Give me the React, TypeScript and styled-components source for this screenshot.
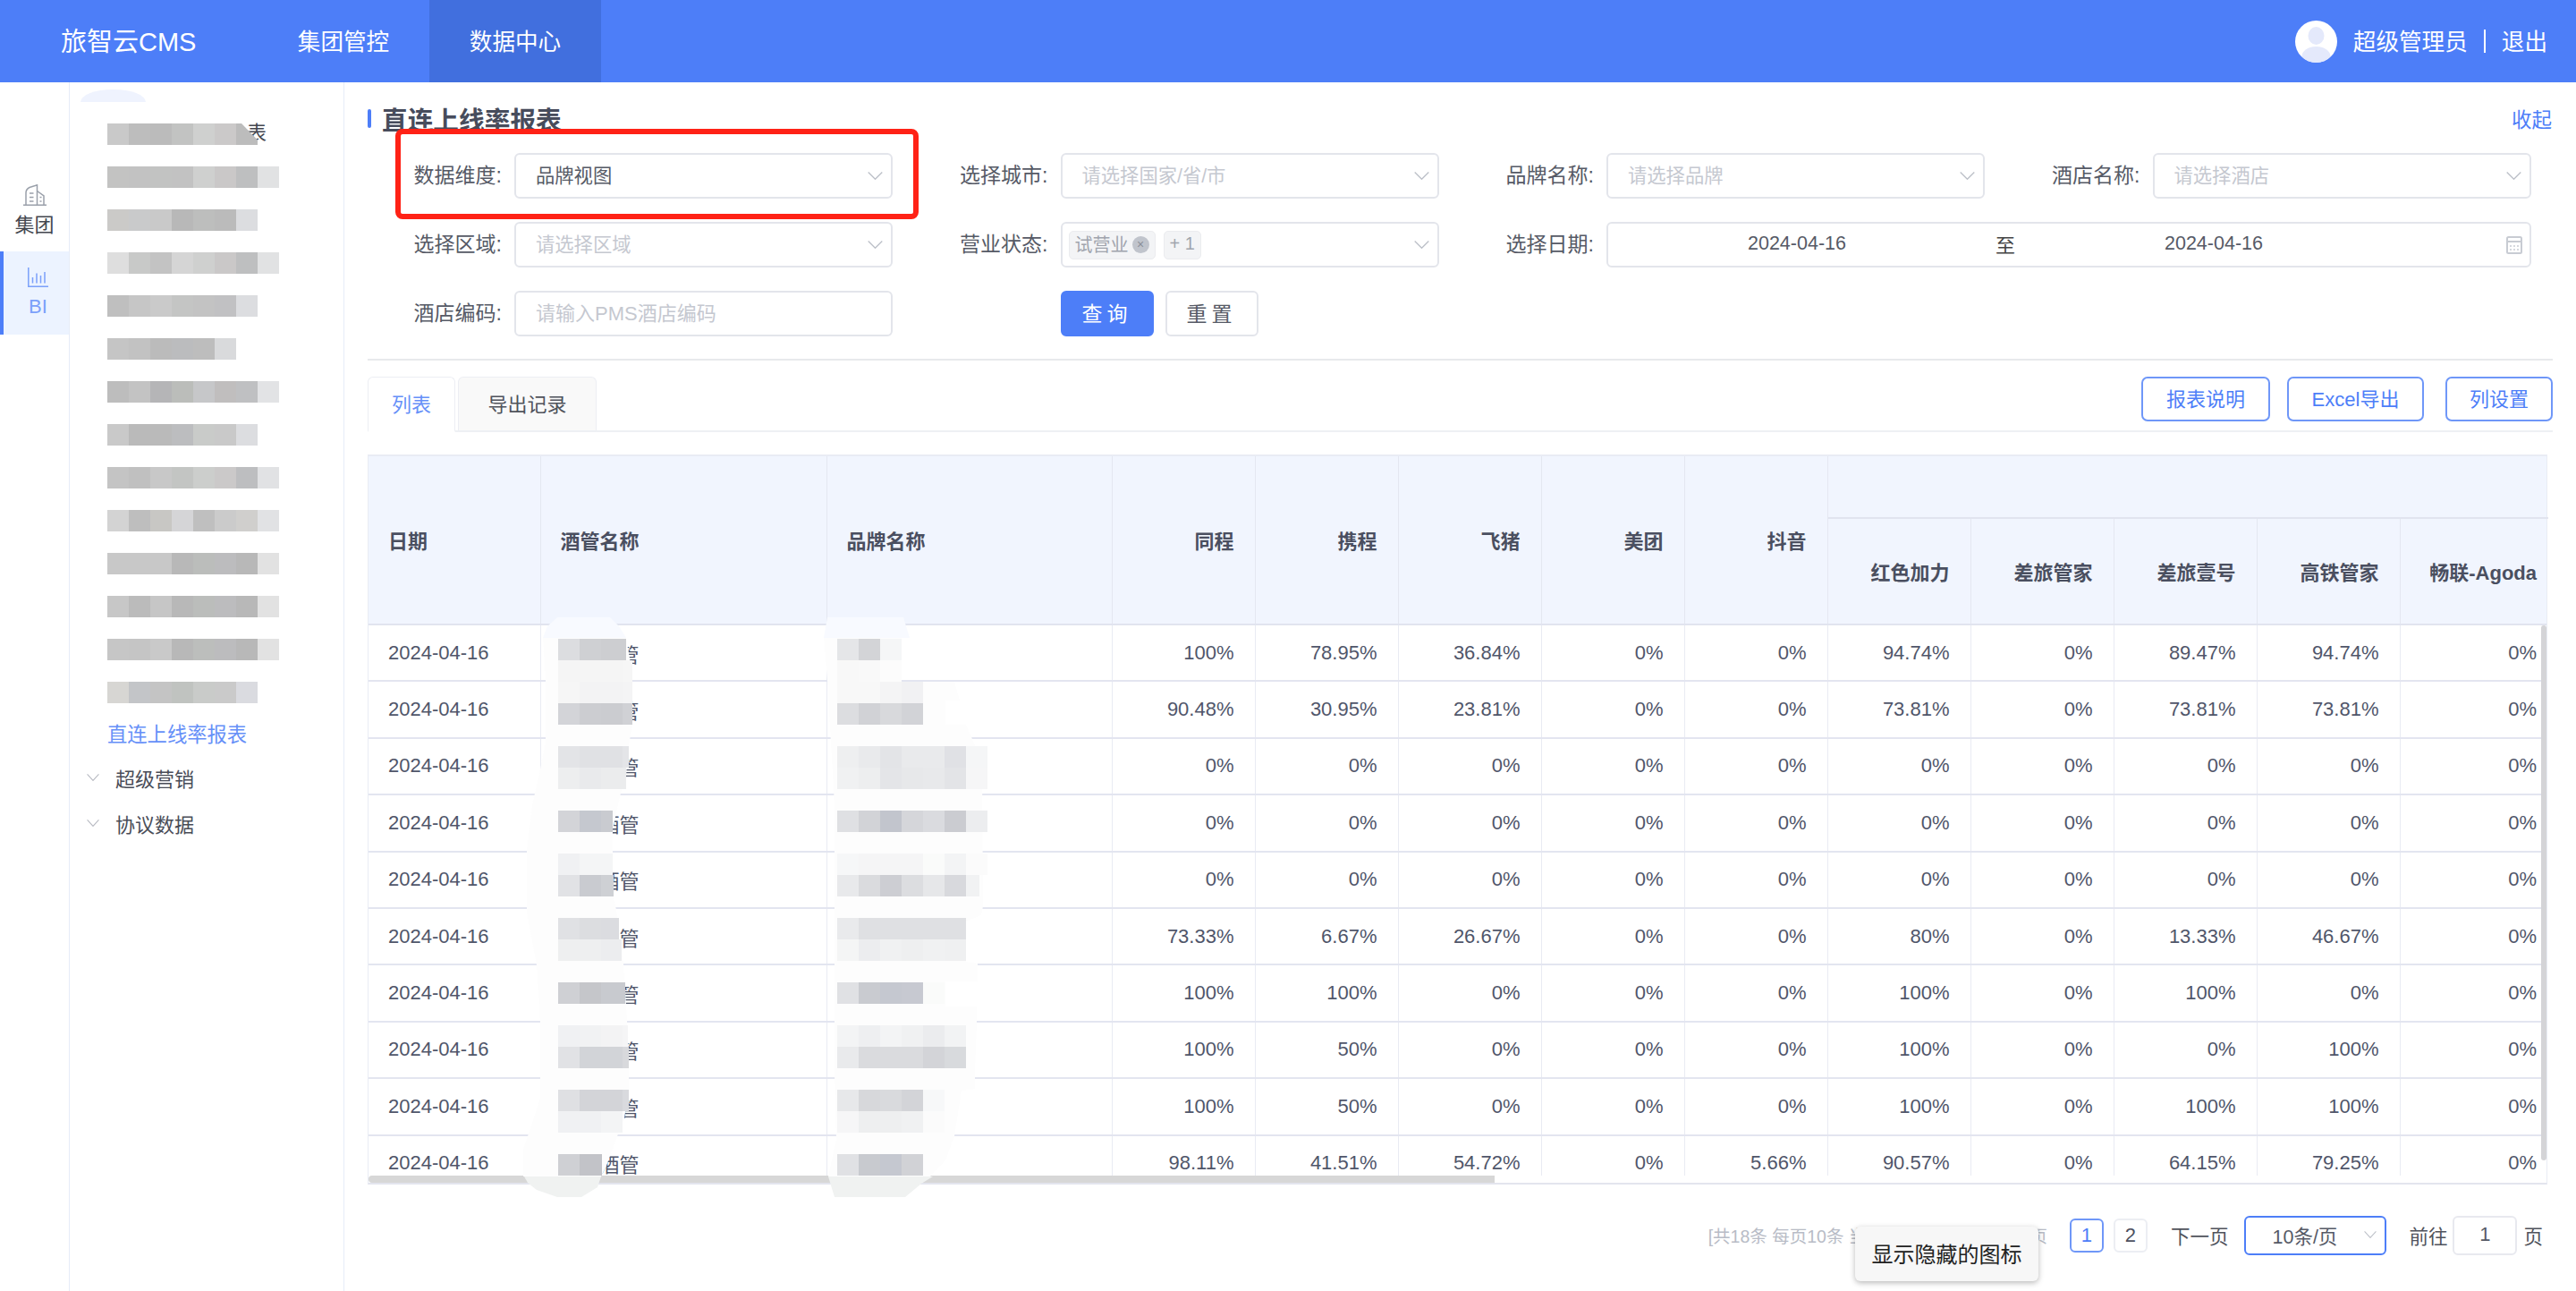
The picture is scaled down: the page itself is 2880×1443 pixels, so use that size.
import React from "react";
import styled, { createGlobalStyle } from "styled-components";

const BLUE = "#4d7ef8";
const FONT = `"Liberation Sans", "Noto Sans CJK SC", sans-serif`;

const Global = createGlobalStyle`
  html, body { margin: 0; padding: 0; background: #fff; }
  body { font-family: ${FONT}; font-size: 22px; color: #50566a; overflow: hidden; }
  * { box-sizing: border-box; }
`;

const Page = styled.div`
  position: relative;
  width: 2880px;
  height: 1443px;
  display: flex;
  flex-direction: column;
  overflow: hidden;
`;

/* ---------- top bar ---------- */
const TopBar = styled.header`
  height: 92px;
  flex: none;
  display: flex;
  align-items: stretch;
  background: ${BLUE};
  color: #fff;
`;
const Logo = styled.div`
  width: 288px;
  padding-left: 68px;
  display: flex;
  align-items: center;
  font-size: 29px;
  padding-bottom: 5px;
`;
const NavItem = styled.div<{ $active?: boolean }>`
  width: 192px;
  display: flex;
  align-items: center;
  justify-content: center;
  font-size: 25.6px;
  padding-bottom: 3px;
  background: ${(p) => (p.$active ? "#416fde" : "transparent")};
`;
const UserArea = styled.div`
  margin-left: auto;
  padding-right: 32px;
  display: flex;
  align-items: center;
  font-size: 25.6px;
`;
const UserName = styled.span`
  margin-left: 18px;
  padding-bottom: 3px;
`;
const UserLogout = styled.span`
  padding-bottom: 3px;
`;
const UserSep = styled.span`
  width: 2px;
  height: 26px;
  margin: 0 18px;
  background: #fff;
`;

/* ---------- body ---------- */
const Body = styled.div`
  flex: 1;
  display: flex;
  min-height: 0;
`;
const Rail = styled.nav`
  width: 78px;
  flex: none;
  padding-top: 96px;
  border-right: 1px solid #e6ecf8;
`;
const RailItem = styled.div<{ $active?: boolean }>`
  height: 93px;
  padding-top: 18px;
  display: flex;
  flex-direction: column;
  align-items: center;
  gap: 10px;
  line-height: 24px;
  font-size: 22px;
  color: ${(p) => (p.$active ? "#7ba0fa" : "#44474f")};
  background: ${(p) => (p.$active ? "#ecf3ff" : "transparent")};
  border-left: 4px solid ${(p) => (p.$active ? BLUE : "transparent")};
  padding-right: ${(p) => (p.$active ? "0" : "4px")};
  padding-left: ${(p) => (p.$active ? "4px" : "0")};
`;

const Menu = styled.aside`
  position: relative;
  width: 307px;
  flex: none;
  padding-top: 32px;
  border-right: 1px solid #e6ecf8;
`;
const MenuArc = styled.span`
  position: absolute;
  left: 12px;
  top: 8px;
  width: 73px;
  height: 14px;
  background: #eff3fe;
  border-radius: 50% 50% 0 0 / 100% 100% 0 0;
`;
const MenuRow = styled.div`
  height: 48px;
  padding: 14px 0 0 42px;
  display: flex;
  align-items: flex-start;
`;
const MosaicCell = styled.span<{ $c: string; $cut?: boolean }>`
  position: relative;
  z-index: 1;
  width: 24px;
  height: 24px;
  background: ${(p) => p.$c};
  ${(p) => (p.$cut ? "clip-path: polygon(0 0, 25% 0, 100% 77%, 100% 100%, 0 100%);" : "")}
`;
const MenuTail = styled.span`
  margin: -1px 0 0 -12px;
  line-height: 24px;
  color: #44474f;
`;
const MenuLink = styled.div`
  height: 48px;
  padding: 0 0 3px 42px;
  display: flex;
  align-items: center;
  color: #6690f8;
  font-size: 22.3px;
`;
const MenuGroup = styled.div`
  height: 51px;
  padding: 0 0 2px 19px;
  display: flex;
  align-items: center;
  gap: 18px;
  color: #4a4d58;
  &:first-of-type {
    margin-top: 3px;
  }
`;

const Main = styled.main`
  flex: 1;
  min-width: 0;
  padding: 20px 26px 0;
`;
const TitleRow = styled.div`
  height: 40px;
  display: flex;
  align-items: center;
`;
const TitleMark = styled.span`
  width: 4px;
  height: 21px;
  margin-right: 12px;
  border-radius: 2px;
  background: ${BLUE};
`;
const Title = styled.h1`
  margin: 0;
  font-size: 28.7px;
  font-weight: 700;
  color: #474c5c;
`;
const Collapse = styled.span`
  margin-left: auto;
  padding-right: 1px;
  color: ${BLUE};
  font-size: 22.5px;
`;

/* ---------- filter form ---------- */
const FilterGrid = styled.div`
  margin-top: 19px;
  display: grid;
  grid-template-columns: repeat(4, 587px);
  grid-auto-rows: 51px;
  column-gap: 23.5px;
  row-gap: 26px;
`;
const Field = styled.div<{ $span?: number }>`
  display: flex;
  align-items: center;
  ${(p) => (p.$span ? `grid-column: span ${p.$span};` : "")}
`;
const FieldLabel = styled.label`
  width: 164px;
  flex: none;
  padding: 0 14px 5px 0;
  text-align: right;
  font-size: 23px;
  color: #565a66;
`;
const Control = styled.div<{ $focus?: boolean }>`
  flex: 1;
  height: 100%;
  min-width: 0;
  display: flex;
  align-items: center;
  border: 2px solid ${(p) => (p.$focus ? BLUE : "#e3e5eb")};
  border-radius: 6px;
  background: #fff;
`;
const ControlText = styled.span<{ $muted?: boolean; $code?: boolean }>`
  padding: 0 0 5px 22px;
  font-size: ${(p) => (p.$code ? "22px" : "21.3px")};
  color: ${(p) => (p.$muted ? "#c5c8d0" : "#565a66")};
`;
const CaretSlot = styled.span`
  margin-left: auto;
  padding-right: 9px;
  display: flex;
`;
const Tag = styled.span`
  height: 32px;
  padding: 0 6px 2px;
  display: inline-flex;
  align-items: center;
  gap: 4px;
  border: 1px solid #ebecef;
  border-radius: 5px;
  background: #f3f4f6;
  color: #a0a4ad;
  font-size: 20px;
`;
const TagClose = styled.span`
  width: 19px;
  height: 19px;
  margin-top: 2px;
  border-radius: 50%;
  background: #c0c4cc;
  color: #8b8f99;
  font-size: 14px;
  line-height: 19px;
  text-align: center;
`;
const TagList = styled.div`
  padding-left: 7px;
  display: flex;
  gap: 9px;
`;
const DateValue = styled.span`
  width: 422px;
  padding-bottom: 2px;
  text-align: center;
  color: #565a66;
  font-size: 21.5px;
`;
const DateSep = styled.span`
  width: 44px;
  padding-bottom: 3px;
  text-align: center;
  color: #444;
`;
const CalSlot = styled.span`
  margin-left: auto;
  padding-right: 8px;
  display: flex;
`;
const ButtonRow = styled.div`
  display: flex;
  gap: 13px;
`;
const SearchButton = styled.button<{ $primary?: boolean }>`
  width: 104px;
  height: 51px;
  padding: 0 0 3px;
  font: inherit;
  font-size: 23px;
  letter-spacing: 5px;
  border: 2px solid ${(p) => (p.$primary ? BLUE : "#e3e5eb")};
  border-radius: 6px;
  background: ${(p) => (p.$primary ? BLUE : "#fff")};
  color: ${(p) => (p.$primary ? "#fff" : "#565a66")};
`;
const Divider = styled.div`
  height: 2px;
  margin-top: 25px;
  background: #e8e9ec;
`;

/* ---------- tabs ---------- */
const TabBar = styled.div`
  margin-top: 18px;
  height: 62px;
  display: flex;
  align-items: flex-start;
  border-bottom: 2px solid #eef0f4;
`;
const Tab = styled.div<{ $active?: boolean; $w: number }>`
  width: ${(p) => p.$w}px;
  height: ${(p) => (p.$active ? "62px" : "60px")};
  margin-right: 3px;
  padding-bottom: 3px;
  display: flex;
  align-items: center;
  justify-content: center;
  border: 1px solid #eceef3;
  border-bottom: ${(p) => (p.$active ? "2px solid #fff" : "none")};
  border-radius: 6px 6px 0 0;
  background: ${(p) => (p.$active ? "#fff" : "#f9f9f9")};
  color: ${(p) => (p.$active ? "#6690f8" : "#50535c")};
`;
const TabActions = styled.div`
  margin-left: auto;
  display: flex;
`;
const OutlineButton = styled.button<{ $w: number; $gap?: number }>`
  width: ${(p) => p.$w}px;
  height: 50px;
  margin-left: ${(p) => p.$gap ?? 0}px;
  padding: 0 0 5px;
  font: inherit;
  color: ${BLUE};
  background: #fff;
  border: 2px solid #6f97f8;
  border-radius: 7px;
`;

/* ---------- table ---------- */
const COLS = "192.5px 320px 319.5px repeat(9, 160px) 165px";
const TableFrame = styled.div`
  position: relative;
  margin-top: 25px;
  width: 2437px;
  height: 816px;
  display: flex;
  flex-direction: column;
  border-top: 2px solid #e9ecf4;
  border-bottom: 2px solid #e3e5ee;
  border-left: 1px solid #e9ecf4;
  border-right: 1px solid #e9ecf4;
`;
const HeadGrid = styled.div`
  flex: none;
  display: grid;
  grid-template-columns: ${COLS};
  grid-template-rows: 70px 117px;
  border-bottom: 2px solid #e1e4ef;
  background: #f1f5fe;
`;
const HeadCell = styled.div<{ $col: string; $row: string; $right?: boolean; $last?: boolean; $line?: boolean }>`
  grid-column: ${(p) => p.$col};
  grid-row: ${(p) => p.$row};
  display: flex;
  align-items: center;
  justify-content: ${(p) => (p.$right ? "flex-end" : "flex-start")};
  padding: ${(p) => (p.$last ? "0 13px 1px 0" : p.$right ? "0 23.5px 1px 0" : "0 0 1px 22px")};
  font-weight: 700;
  color: #4a4f60;
  white-space: nowrap;
  border-right: ${(p) => (p.$last ? "none" : "1px solid #e4e7f1")};
  border-bottom: ${(p) => (p.$line ? "2px solid #e1e4ef" : "none")};
`;
const BodyView = styled.div`
  flex: 1;
  min-height: 0;
  overflow: hidden;
`;
const BodyRow = styled.div`
  height: 63.4px;
  display: grid;
  grid-template-columns: ${COLS};
  border-bottom: 2px solid #e3e5f0;
`;
const BodyCell = styled.div<{ $right?: boolean; $last?: boolean }>`
  display: flex;
  align-items: center;
  justify-content: ${(p) => (p.$right ? "flex-end" : "flex-start")};
  padding: ${(p) => (p.$last ? "0 13px 0 0" : p.$right ? "0 23.5px 0 0" : "0 0 0 22px")};
  color: #50566a;
  white-space: nowrap;
  border-right: ${(p) => (p.$last ? "none" : "1px solid #e9ebf3")};
`;
const HTrack = styled.div`
  flex: none;
  height: 8px;
  background: #fff;
`;
const HThumb = styled.div`
  width: 1259px;
  height: 8px;
  background: #d7d7d7;
  border-radius: 4px 0 0 4px;
`;
const VThumb = styled.div`
  position: absolute;
  right: 0;
  top: 189px;
  width: 6px;
  height: 598px;
  background: #d4d4d7;
  border-radius: 3px;
`;

/* ---------- pager ---------- */
const Pager = styled.div`
  margin-top: 35px;
  height: 44px;
  padding-right: 11px;
  display: flex;
  align-items: center;
  justify-content: flex-end;
`;
const PagerSummary = styled.span`
  margin-right: 25px;
  padding-bottom: 2px;
  font-size: 19.5px;
  color: #b8bcc6;
`;
const PageNum = styled.span<{ $active?: boolean; $gap: number }>`
  width: 38px;
  height: 38px;
  margin-right: ${(p) => p.$gap}px;
  display: flex;
  align-items: center;
  justify-content: center;
  border: 2px solid ${(p) => (p.$active ? "#6f97f8" : "#eceef3")};
  border-radius: 6px;
  color: ${(p) => (p.$active ? BLUE : "#4d5160")};
`;
const PagerText = styled.span<{ $ml?: number; $mr?: number }>`
  margin-left: ${(p) => p.$ml ?? 0}px;
  margin-right: ${(p) => p.$mr ?? 0}px;
  padding-bottom: 2px;
  font-size: 21.5px;
  color: #50535c;
`;
const PageSize = styled.div`
  width: 159px;
  height: 44px;
  padding: 0 0 2px 29px;
  display: flex;
  align-items: center;
  border: 2px solid ${BLUE};
  border-radius: 6px;
  font-size: 21.5px;
  color: #565a66;
`;
const PageJump = styled.div`
  width: 72px;
  height: 44px;
  padding-bottom: 2px;
  display: flex;
  align-items: center;
  justify-content: center;
  border: 2px solid #e8e9ef;
  border-radius: 6px;
  color: #565a66;
`;

/* ---------- things lying over the page ---------- */
const RedBox = styled.div`
  position: absolute;
  left: 442px;
  top: 144px;
  width: 585px;
  height: 101px;
  border: 6px solid #ff2216;
  border-radius: 8px;
`;
const Tooltip = styled.div`
  position: absolute;
  left: 2074px;
  top: 1371px;
  width: 205px;
  height: 61px;
  padding-bottom: 3px;
  display: flex;
  align-items: center;
  justify-content: center;
  background: #f7f7f7;
  border-radius: 6px;
  box-shadow: 0 2px 6px rgba(0, 0, 0, 0.28);
  color: #222;
  font-size: 24px;
`;
const SmearLayer = styled.svg`
  position: absolute;
  left: 0;
  top: 0;
  pointer-events: none;
`;

/* ---------- drawn icons ---------- */
const Caret = ({ w = 17, h = 9, c = "#bcc0c8" }: { w?: number; h?: number; c?: string }) => (
  <svg width={w} height={h} viewBox="0 0 17 9" fill="none" preserveAspectRatio="none">
    <path d="M0.7 0.5 L8.5 8.3 L16.3 0.5" stroke={c} strokeWidth="1.3" />
  </svg>
);
const BuildingIcon = () => (
  <svg width="26" height="24" viewBox="0 0 26 24" fill="none" stroke="#9aa0aa" strokeWidth="1.5">
    <path d="M0 23.2 H26" />
    <path d="M3 23 V9.5 Q3 5.5 7 3.5 L15.5 0.8 V23" />
    <path d="M15.5 7.5 L23 13 V23" />
    <path d="M7 10 h4.5 M7 14.5 h4.5 M7 19 h4.5 M18.5 14.5 h2 M18.5 19 h2" />
  </svg>
);
const ChartIcon = () => (
  <svg width="23" height="22" viewBox="0 0 23 22" fill="none" stroke="#7ba0fa" strokeWidth="1.5">
    <path d="M0.8 0 V21.2 H23" />
    <path d="M5.5 11 V17.5 M10 6.5 V17.5 M14.5 9 V17.5 M19 5 V17.5" />
  </svg>
);
const CalendarIcon = () => (
  <svg width="18" height="20" viewBox="0 0 18 20" fill="none">
    <rect x="1" y="1" width="16" height="18" rx="1.5" stroke="#c8ccd3" strokeWidth="2" />
    <path d="M1 6 H17" stroke="#c8ccd3" strokeWidth="2" />
    <path d="M4 11 h2 M8 11 h2 M12 11 h2 M4 15 h2 M8 15 h2 M12 15 h2" stroke="#c8ccd3" strokeWidth="1.5" />
  </svg>
);
const Avatar = () => (
  <svg width="47" height="47" viewBox="0 0 47 47">
    <defs>
      <clipPath id="avatar-disc">
        <circle cx="23.5" cy="23.5" r="23.5" />
      </clipPath>
    </defs>
    <circle cx="23.5" cy="23.5" r="23.5" fill="#fff" />
    <g clipPath="url(#avatar-disc)" fill="#e4e9fb">
      <ellipse cx="23.5" cy="17" rx="9" ry="10" />
      <ellipse cx="23.5" cy="40" rx="16" ry="11" />
    </g>
  </svg>
);

/* ---------- data ---------- */
const menuMosaic: string[][] = [
  ["#c9c9c9", "#bdbdbd", "#bbbbbb", "#c2c3c2", "#cfd0cf", "#cbc9c9", "#bcbcbc"],
  ["#c3c3c2", "#c2c2c2", "#c2c3c2", "#c2c2c2", "#cfd0cf", "#cac8c8", "#bebfc0", "#e1e2e3"],
  ["#cbcac8", "#c9cacb", "#c9c9c9", "#b8b8b8", "#bdbebd", "#bbbbbb", "#dcdde0"],
  ["#dedede", "#c8c9c8", "#c3c3c3", "#d5d5d5", "#cfd0cf", "#cac8c8", "#bebfc0", "#e1e2e3"],
  ["#bfbfbf", "#c6c6c6", "#cacaca", "#c4c5c4", "#c3c3c3", "#c1c1c3", "#dcdde0"],
  ["#c5c5c5", "#c2c2c2", "#bbbbbb", "#bbbcbe", "#bdbdbd", "#d9dadc"],
  ["#bdbdbd", "#c3c3c3", "#b5b5b7", "#bbbdba", "#c6c7c9", "#c0bebe", "#bfc0c2", "#e2e3e5"],
  ["#c9c9c9", "#bababa", "#bababa", "#bcbdbf", "#c9cbc9", "#c9c9c9", "#dcdde0"],
  ["#c4c4c4", "#c0c0c0", "#c8c8c8", "#c3c5c3", "#cccecc", "#cbc9c9", "#bdbec0", "#e1e2e4"],
  ["#d3d3d3", "#bebebe", "#c8c7c4", "#d5d5d7", "#bfbfbf", "#cbcbcb", "#d0cfcd", "#e1e2e4"],
  ["#c8c8c8", "#c8c8c8", "#c8c8c8", "#b8b8b8", "#bbbdbb", "#bcbcbe", "#b8b8b8", "#e2e2e2"],
  ["#c7c7c7", "#bbbbbb", "#c6c6c6", "#b8b8b8", "#bbbdbb", "#bcbcbe", "#b8b8b8", "#e2e2e2"],
  ["#c6c6c6", "#c5c5c5", "#c9c9c9", "#b8b8b8", "#bcbebc", "#bcbcbe", "#b8b8b8", "#e2e2e2"],
  ["#d7d6d3", "#c3c5c8", "#c4c4c4", "#c0c3c0", "#c9cbc9", "#cacaca", "#dadbe0"],
];

const rows: string[][] = [
  ["100%", "78.95%", "36.84%", "0%", "0%", "94.74%", "0%", "89.47%", "94.74%", "0%"],
  ["90.48%", "30.95%", "23.81%", "0%", "0%", "73.81%", "0%", "73.81%", "73.81%", "0%"],
  ["0%", "0%", "0%", "0%", "0%", "0%", "0%", "0%", "0%", "0%"],
  ["0%", "0%", "0%", "0%", "0%", "0%", "0%", "0%", "0%", "0%"],
  ["0%", "0%", "0%", "0%", "0%", "0%", "0%", "0%", "0%", "0%"],
  ["73.33%", "6.67%", "26.67%", "0%", "0%", "80%", "0%", "13.33%", "46.67%", "0%"],
  ["100%", "100%", "0%", "0%", "0%", "100%", "0%", "100%", "0%", "0%"],
  ["100%", "50%", "0%", "0%", "0%", "100%", "0%", "0%", "100%", "0%"],
  ["100%", "50%", "0%", "0%", "0%", "100%", "0%", "100%", "100%", "0%"],
  ["98.11%", "41.51%", "54.72%", "0%", "5.66%", "90.57%", "0%", "64.15%", "79.25%", "0%"],
];

const topHeads = ["同程", "携程", "飞猪", "美团", "抖音"];
const subHeads = ["红色加力", "差旅管家", "差旅壹号", "高铁管家", "畅联-Agoda"];

type Strip = { y: number; c: string[]; r?: number };
const smearA: Strip[] = [
  { y: 714, c: ["#dcdde0", "#cfd0d3", "#cdced1", "#cdced1"], r: 700 },
  { y: 738, c: ["#f5f5f5", "#f5f5f5", "#f5f5f5", "#f6f6f6"], r: 707 },
  { y: 762, c: ["#f6f6f6", "#f3f3f4", "#f3f3f4", "#f4f4f5"], r: 707 },
  { y: 786, c: ["#d3d4d8", "#cccdd1", "#cbccd0", "#d0d1d5"], r: 707 },
  { y: 834, c: ["#e3e4e7", "#e0e1e4", "#e0e1e4", "#e4e5e8"], r: 703 },
  { y: 858, c: ["#edeeef", "#e9eaec", "#ebeced", "#ebeced"], r: 700 },
  { y: 906, c: ["#d3d4d8", "#c5c8cf", "#c9cbd0"], r: 685 },
  { y: 954, c: ["#f0f1f3", "#f4f5f6", "#f4f5f6"], r: 685 },
  { y: 978, c: ["#e1e2e5", "#c9cbd0", "#ced0d4"], r: 686 },
  { y: 1026, c: ["#e0e1e4", "#dcdde0", "#dbdce0"], r: 692 },
  { y: 1050, c: ["#eeeff0", "#eeeff0", "#ecedef"], r: 695 },
  { y: 1098, c: ["#cfd0d4", "#c5c6ca", "#c8cacf", "#c8cacf"], r: 699 },
  { y: 1146, c: ["#f0f1f3", "#f1f2f3", "#f3f3f4", "#f5f5f6"], r: 702 },
  { y: 1170, c: ["#e1e2e5", "#d2d4d8", "#d2d4d8", "#d8d9dc"], r: 703 },
  { y: 1218, c: ["#dfe0e3", "#d3d4d8", "#d3d4d8", "#d9dade"], r: 703 },
  { y: 1242, c: ["#f0f1f3", "#f0f1f3", "#f3f4f5"], r: 698 },
  { y: 1290, c: ["#cfd0d4", "#c2c3c8", "#c2c3c8"], r: 673 },
];
const smearB: Strip[] = [
  { y: 714, c: ["#e5e6e8", "#d3d4d7", "#f5f6f7"] },
  { y: 738, c: ["#f8f8f8", "#f9f9f9", "#fcfcfc"] },
  { y: 762, c: ["#f8f8f8", "#f8f8f8", "#f4f4f5", "#f1f1f3"] },
  { y: 786, c: ["#dcdde0", "#d1d2d6", "#d8d9dc", "#d2d3d7"] },
  { y: 834, c: ["#eeeff0", "#e9eaec", "#e3e4e7", "#e9eaec", "#e9eaec", "#e0e1e5", "#f5f6f7"] },
  { y: 858, c: ["#f0f1f2", "#edeeef", "#e4e5e8", "#e7e8ea", "#e8e9eb", "#e3e4e7", "#f6f6f7"] },
  { y: 906, c: ["#dfe0e3", "#d2d3d7", "#c2c5cd", "#d5d6da", "#dadbdf", "#cbccd1", "#ecedef"] },
  { y: 954, c: ["#f6f7f8", "#f5f5f6", "#f5f5f6", "#f5f5f6", "#fafbfa", "#f3f4f5", "#fbfbfb"] },
  { y: 978, c: ["#e8e9eb", "#dadbde", "#cdced3", "#dcdde0", "#e6e7e9", "#d8d9dd", "#f1f2f3"], r: 1095 },
  { y: 1026, c: ["#e9eaec", "#dfe0e3", "#dfe0e3", "#dfe0e3", "#dfe0e3", "#dfe0e3"] },
  { y: 1050, c: ["#f4f5f5", "#ecedef", "#f0f1f2", "#eeeff0", "#f0f1f2", "#eff0f1"] },
  { y: 1098, c: ["#e0e1e4", "#c9cbd0", "#c5c8d0", "#c7c9d1", "#fafbfa"] },
  { y: 1146, c: ["#f3f4f5", "#eeeff1", "#f3f4f5", "#f0f1f2", "#ebecee", "#f2f3f4"] },
  { y: 1170, c: ["#e9eaec", "#dadbde", "#dadbde", "#dadbde", "#d3d4d8", "#d8dadd"] },
  { y: 1218, c: ["#e7e8ea", "#d7d8db", "#d9dadd", "#d3d4d8", "#f7f8f9"] },
  { y: 1242, c: ["#f6f6f7", "#eeeff0", "#eeeff0", "#f0f1f2", "#fbfbfb"] },
  { y: 1290, c: ["#e0e1e4", "#c8cacf", "#c5c8d0", "#d1d2d6"] },
];

const renderStrips = (strips: Strip[], x0: number) =>
  strips.flatMap((s) =>
    s.c.map((fill, i) => {
      const x = x0 + i * 24;
      const width = s.r ? Math.min(24, s.r - x) : 24;
      return <rect key={`${x0}-${s.y}-${i}`} x={x} y={s.y} width={width} height={24} fill={fill} />;
    })
  );

const Select = ({ text, muted = true }: { text: string; muted?: boolean }) => (
  <Control>
    <ControlText $muted={muted}>{text}</ControlText>
    <CaretSlot>
      <Caret />
    </CaretSlot>
  </Control>
);

export default function App() {
  return (
    <Page>
      <Global />
      <TopBar>
        <Logo>旅智云CMS</Logo>
        <NavItem>集团管控</NavItem>
        <NavItem $active>数据中心</NavItem>
        <UserArea>
          <Avatar />
          <UserName>超级管理员</UserName>
          <UserSep />
          <UserLogout>退出</UserLogout>
        </UserArea>
      </TopBar>
      <Body>
        <Rail>
          <RailItem>
            <BuildingIcon />
            <span>集团</span>
          </RailItem>
          <RailItem $active>
            <ChartIcon />
            <span>BI</span>
          </RailItem>
        </Rail>
        <Menu>
          <MenuArc />
          {menuMosaic.map((cells, r) => (
            <MenuRow key={r}>
              {cells.map((c, i) => (
                <MosaicCell key={i} $c={c} $cut={r === 0 && i === 6} />
              ))}
              {r === 0 && <MenuTail>表</MenuTail>}
            </MenuRow>
          ))}
          <MenuLink>直连上线率报表</MenuLink>
          <MenuGroup>
            <Caret w={14} h={8} c="#b5b8c0" />
            超级营销
          </MenuGroup>
          <MenuGroup>
            <Caret w={14} h={8} c="#b5b8c0" />
            协议数据
          </MenuGroup>
        </Menu>
        <Main>
          <TitleRow>
            <TitleMark />
            <Title>直连上线率报表</Title>
            <Collapse>收起</Collapse>
          </TitleRow>
          <FilterGrid>
            <Field>
              <FieldLabel>数据维度:</FieldLabel>
              <Select text="品牌视图" muted={false} />
            </Field>
            <Field>
              <FieldLabel>选择城市:</FieldLabel>
              <Select text="请选择国家/省/市" />
            </Field>
            <Field>
              <FieldLabel>品牌名称:</FieldLabel>
              <Select text="请选择品牌" />
            </Field>
            <Field>
              <FieldLabel>酒店名称:</FieldLabel>
              <Select text="请选择酒店" />
            </Field>
            <Field>
              <FieldLabel>选择区域:</FieldLabel>
              <Select text="请选择区域" />
            </Field>
            <Field>
              <FieldLabel>营业状态:</FieldLabel>
              <Control>
                <TagList>
                  <Tag>
                    试营业
                    <TagClose>×</TagClose>
                  </Tag>
                  <Tag>+ 1</Tag>
                </TagList>
                <CaretSlot>
                  <Caret />
                </CaretSlot>
              </Control>
            </Field>
            <Field $span={2}>
              <FieldLabel>选择日期:</FieldLabel>
              <Control>
                <DateValue>2024-04-16</DateValue>
                <DateSep>至</DateSep>
                <DateValue>2024-04-16</DateValue>
                <CalSlot>
                  <CalendarIcon />
                </CalSlot>
              </Control>
            </Field>
            <Field>
              <FieldLabel>酒店编码:</FieldLabel>
              <Control>
                <ControlText $muted $code>
                  请输入PMS酒店编码
                </ControlText>
              </Control>
            </Field>
            <Field>
              <FieldLabel />
              <ButtonRow>
                <SearchButton $primary>查询</SearchButton>
                <SearchButton>重置</SearchButton>
              </ButtonRow>
            </Field>
          </FilterGrid>
          <Divider />
          <TabBar>
            <Tab $active $w={98}>
              列表
            </Tab>
            <Tab $w={155}>导出记录</Tab>
            <TabActions>
              <OutlineButton $w={144}>报表说明</OutlineButton>
              <OutlineButton $w={153} $gap={19}>
                Excel导出
              </OutlineButton>
              <OutlineButton $w={120} $gap={24}>
                列设置
              </OutlineButton>
            </TabActions>
          </TabBar>
          <TableFrame>
            <HeadGrid>
              <HeadCell $col="1" $row="1 / 3">日期</HeadCell>
              <HeadCell $col="2" $row="1 / 3">酒管名称</HeadCell>
              <HeadCell $col="3" $row="1 / 3">品牌名称</HeadCell>
              {topHeads.map((h, i) => (
                <HeadCell key={h} $col={`${i + 4}`} $row="1 / 3" $right>
                  {h}
                </HeadCell>
              ))}
              <HeadCell $col="9 / 14" $row="1" $last $line />
              {subHeads.map((h, i) => (
                <HeadCell key={h} $col={`${i + 9}`} $row="2" $right $last={i === 4}>
                  {h}
                </HeadCell>
              ))}
            </HeadGrid>
            <BodyView>
              {rows.map((row, r) => (
                <BodyRow key={r}>
                  <BodyCell>2024-04-16</BodyCell>
                  <BodyCell>酒店酒管</BodyCell>
                  <BodyCell />
                  {row.map((v, i) => (
                    <BodyCell key={i} $right $last={i === row.length - 1}>
                      {v}
                    </BodyCell>
                  ))}
                </BodyRow>
              ))}
            </BodyView>
            <HTrack>
              <HThumb />
            </HTrack>
            <VThumb />
          </TableFrame>
          <Pager>
            <PagerSummary>[共18条 每页10条 当前显示第1页， 总共2页</PagerSummary>
            <PageNum $active $gap={11}>
              1
            </PageNum>
            <PageNum $gap={14}>2</PageNum>
            <PagerText $ml={12} $mr={18}>
              下一页
            </PagerText>
            <PageSize>
              10条/页
              <CaretSlot>
                <Caret w={14} h={8} />
              </CaretSlot>
            </PageSize>
            <PagerText $ml={25} $mr={6}>
              前往
            </PagerText>
            <PageJump>1</PageJump>
            <PagerText $ml={7}>页</PagerText>
          </Pager>
        </Main>
      </Body>

      <SmearLayer width="2880" height="1443" viewBox="0 0 2880 1443">
        <polygon
          fill="#fdfdfd"
          points="607,713 700,713 707,753 707,810 703,833 700,867 693,890 685,927 685,1000 689,1017 697,1077 700,1123 703,1177 703,1217 698,1250 690,1270 678,1303 672,1315 585,1315 585,1285 600,1240 604,1227 604,1143 600,1079 589,1020 589,950 595,900 604,860 610,830 610,760"
        />
        <polygon fill="#f8faff" points="623,690 682,690 692,700 700,713 607,713 612,700" />
        <polygon fill="#f0f2f1" points="586,1315 672,1315 668,1327 650,1338 623,1338 600,1330 590,1322" />
        <polygon
          fill="#fdfdfd"
          points="921,713 1008,713 1008,762 1067,762 1073,783 1057,783 1057,810 1080,810 1090,833 1098,860 1099,1013 1097,1023 1080,1030 1080,1075 1093,1077 1093,1097 1057,1097 1057,1125 1092,1125 1092,1143 1090,1197 1090,1217 1075,1219 1067,1270 1057,1297 1040,1315 926,1315 935,1273 933,1200 933,900 925,760"
        />
        <polygon fill="#f8faff" points="925,690 1010,690 1017,713 921,713" />
        <polygon fill="#f0f2f1" points="926,1315 1043,1315 1030,1323 1012,1338 933,1338" />
        {renderStrips(smearA, 624)}
        {renderStrips(smearB, 936)}
      </SmearLayer>
      <RedBox />
      <Tooltip>显示隐藏的图标</Tooltip>
    </Page>
  );
}
